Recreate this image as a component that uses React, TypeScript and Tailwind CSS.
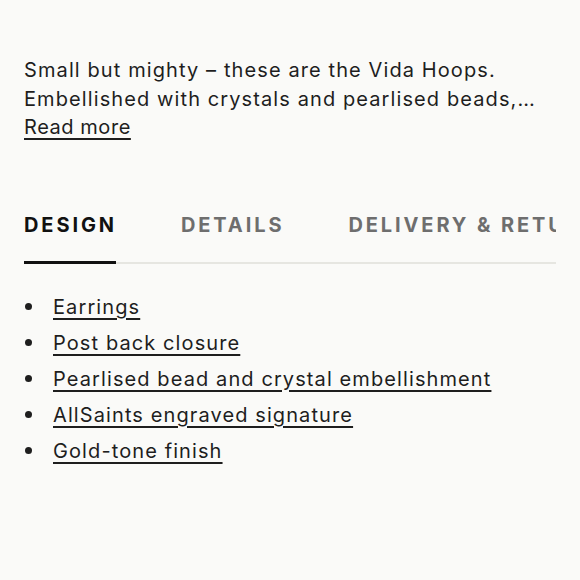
export default function App() {
  const items = [
    'Earrings',
    'Post back closure',
    'Pearlised bead and crystal embellishment',
    'AllSaints engraved signature',
    'Gold-tone finish',
  ]
  const tabs = ['DESIGN', 'DETAILS', 'DELIVERY & RETURNS']

  return (
    <div
      className="w-[580px] h-[580px] bg-[#fafaf8] text-[#1e1e1e] px-6 pt-[56px] overflow-hidden"
      style={{ fontFamily: 'Inter, "Liberation Sans", sans-serif' }}
    >
      {/* Description */}
      <p className="text-[20px] leading-[28.5px] tracking-[1.1px] w-[540px] whitespace-nowrap">
        Small but mighty – these are the Vida Hoops.
        <br />
        Embellished with crystals and pearlised beads,…
      </p>
      <a className="text-[20px] leading-[28.5px] tracking-[0.55px] underline underline-offset-[4px] decoration-[1.5px]">
        Read more
      </a>

      {/* Tabs */}
      <div className="mt-[71px] w-[532px] overflow-hidden">
        <div className="flex gap-[64px] whitespace-nowrap">
          {tabs.map((t, i) => (
            <span
              key={t}
              className={
                'shrink-0 text-[20px] font-bold tracking-[2.9px] leading-[24px] ' +
                (i === 0 ? 'text-[#111]' : 'text-[#6e6e6e]')
              }
            >
              {t}
            </span>
          ))}
        </div>
        <div className="relative mt-[24px] h-[3px]">
          <div className="absolute left-0 right-0 top-[1px] h-[2px] bg-[#e6e6e1]" />
          <div className="absolute left-0 top-0 h-[3px] w-[92px] bg-[#111]" />
        </div>
      </div>

      {/* List */}
      <ul className="mt-[30px] flex flex-col gap-[10px]">
        {items.map((it) => (
          <li key={it} className="flex items-center text-[20px] leading-[26px] tracking-[1.1px]">
            <span className="w-[29px] flex items-center">
              <span className="ml-[1px] w-[7px] h-[7px] rounded-full bg-[#1e1e1e]" />
            </span>
            <a className="underline underline-offset-[4px] decoration-[1.5px]">{it}</a>
          </li>
        ))}
      </ul>
    </div>
  )
}
